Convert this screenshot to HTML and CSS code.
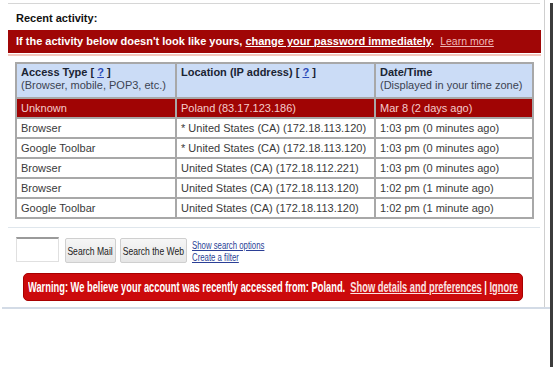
FILE: index.html
```html
<!DOCTYPE html>
<html lang="en">
<head>
  <meta charset="UTF-8" />
  <title>Recent activity</title>
  <link rel="stylesheet" href="styles.css">
</head>
<body>
  <div class="shot">
    <div class="page">
      <div class="rule top-rule"></div>
      <h2 class="title">Recent activity:</h2>
      <div class="alert">
        <b>If the activity below doesn't look like yours, <a href="#">change your password immediately</a>.</b>
        <a class="learn" href="#">Learn more</a>
      </div>
      <div class="alert-edge"></div>

      <!-- access log -->
      <table class="log">
        <colgroup>
          <col class="c1"><col class="c2"><col class="c3">
        </colgroup>
        <thead>
          <tr>
            <th><b>Access Type [ <a href="#">?</a> ]</b><span>(Browser, mobile, POP3, etc.)</span></th>
            <th><b>Location (IP address) [ <a href="#">?</a> ]</b><span>&nbsp;</span></th>
            <th><b>Date/Time</b><span>(Displayed in your time zone)</span></th>
          </tr>
        </thead>
        <tbody>
          <tr class="flagged">
            <td>Unknown</td><td>Poland (83.17.123.186)</td><td>Mar 8 (2 days ago)</td>
          </tr>
          <tr>
            <td>Browser</td><td>* United States (CA) (172.18.113.120)</td><td>1:03 pm (0 minutes ago)</td>
          </tr>
          <tr>
            <td>Google Toolbar</td><td>* United States (CA) (172.18.113.120)</td><td>1:03 pm (0 minutes ago)</td>
          </tr>
          <tr>
            <td>Browser</td><td>United States (CA) (172.18.112.221)</td><td>1:03 pm (0 minutes ago)</td>
          </tr>
          <tr>
            <td>Browser</td><td>United States (CA) (172.18.113.120)</td><td>1:02 pm (1 minute ago)</td>
          </tr>
          <tr>
            <td>Google Toolbar</td><td>United States (CA) (172.18.113.120)</td><td>1:02 pm (1 minute ago)</td>
          </tr>
        </tbody>
      </table>

      <div class="rule mid-rule"></div>

      <div class="search">
        <input class="query" type="text">
        <button class="btn mail"><span class="narrow">Search Mail</span></button>
        <button class="btn web"><span class="narrow">Search the Web</span></button>
        <div class="search-links">
          <a href="#"><span class="narrow">Show search options</span></a>
          <a href="#"><span class="narrow">Create a filter</span></a>
        </div>
      </div>

      <div class="warning">
        <span class="squeeze">Warning: We believe your account was recently accessed from: Poland.&nbsp; <a href="#">Show details and preferences</a> | <a href="#">Ignore</a></span>
      </div>
    </div>
    <div class="base-rule"></div>
  </div>
</body>
</html>
```

FILE: styles.css
```css
body {
  margin: 0;
  background: #fff;
  font-family: "Liberation Sans", Arial, sans-serif;
  color: #333;
}
.shot {
  width: 550px;
  height: 367px;
  background: #fff;
  box-shadow: 3px 3px 0 #3c3c3c;
}
.page {
  width: 545px;
  height: 308px;
  padding-top: 3px;
  border-right: 1px solid #cfcfcf;
  box-sizing: border-box;
}
.rule {
  margin-left: 8px;
  width: 532px;
  border-top: 1px solid #d6d6d6;
}
.title {
  margin: 7px 0 0 16px;
  font-size: 11px;
  line-height: 14px;
  font-weight: bold;
  color: #111;
}
.alert {
  margin: 5px 0 0 8px;
  width: 533px;
  height: 23px;
  box-sizing: border-box;
  padding-left: 8px;
  background: #a00606;
  color: #fff;
  font-size: 11px;
  line-height: 23px;
  white-space: nowrap;
}
.alert a {
  color: #fff;
}
.alert .learn {
  margin-left: 3px;
  color: #f0b8b8;
  font-size: 10.5px;
}
.alert-edge {
  margin-left: 8px;
  width: 533px;
  height: 2px;
  margin-top: 1px;
  background: #f3c7bd;
}
.log {
  margin: 6px 0 0 15px;
  width: 517px;
  border-collapse: collapse;
  border: 2px solid #a2a2a2;
  font-size: 11px;
  table-layout: fixed;
}
.log .c1 { width: 160px; }
.log .c2 { width: 199px; }
.log .c3 { width: 158px; }
.log th,
.log td {
  border: 2px solid #a8a8a8;
  padding: 0 4px;
  text-align: left;
  white-space: nowrap;
  overflow: hidden;
}
.log th {
  height: 31px;
  background: #cbdcf6;
  vertical-align: top;
  padding-top: 2px;
  line-height: 13px;
}
.log th b {
  display: block;
  color: #1a2433;
}
.log th span {
  display: block;
  font-weight: normal;
  color: #3b4352;
}
.log th a {
  color: #2a49b8;
}
.log td {
  height: 18px;
  line-height: 18px;
  color: #3a3a3a;
}
.log .flagged td {
  background: #a00404;
  color: #f5cccc;
}
.mid-rule {
  margin-top: 8px;
  border-top-color: #dfe6ec;
}
.search {
  display: flex;
  align-items: flex-start;
  margin: 9px 0 0 16px;
  height: 27px;
}
.query {
  width: 43px;
  height: 25px;
  box-sizing: border-box;
  margin: 0;
  border: 1px solid #e0e0e0;
  border-top: 2px solid #9a9a9a;
  background: #fff;
}
.btn {
  height: 25px;
  margin: 1px 0 0 6px;
  padding: 0;
  border: 1px solid #cfcfcf;
  border-radius: 2px;
  background: linear-gradient(#f6f6f6, #e6e6e6);
  font-family: "Liberation Sans", sans-serif;
  font-size: 11px;
  color: #222;
  white-space: nowrap;
  overflow: hidden;
  display: flex;
  align-items: center;
  justify-content: center;
}
.narrow {
  display: inline-block;
  transform: scaleX(0.78);
  white-space: nowrap;
}
.mail { width: 51px; }
.web { width: 67px; margin-left: 4px; }
.search-links {
  display: flex;
  flex-direction: column;
  margin: 3px 0 0 5px;
  font-size: 10px;
  line-height: 12px;
  white-space: nowrap;
}
.search-links a {
  color: #2b3f96;
}
.search-links .narrow {
  transform-origin: left center;
  text-decoration: underline;
}
.warning {
  margin: 9px 0 0 23px;
  width: 500px;
  height: 28px;
  box-sizing: border-box;
  border: 1px solid #a80000;
  border-radius: 5px;
  background: #cc0a0c;
  padding-left: 4px;
  overflow: hidden;
  white-space: nowrap;
}
.squeeze {
  display: inline-block;
  transform: scaleX(0.665);
  transform-origin: left center;
  font-weight: bold;
  font-size: 14px;
  line-height: 26px;
  color: #fff;
}
.squeeze a {
  color: #fbe3e3;
}
.base-rule {
  margin: -1px 0 0 2px;
  width: 548px;
  border-top: 2px solid #d3dbe6;
}
```
